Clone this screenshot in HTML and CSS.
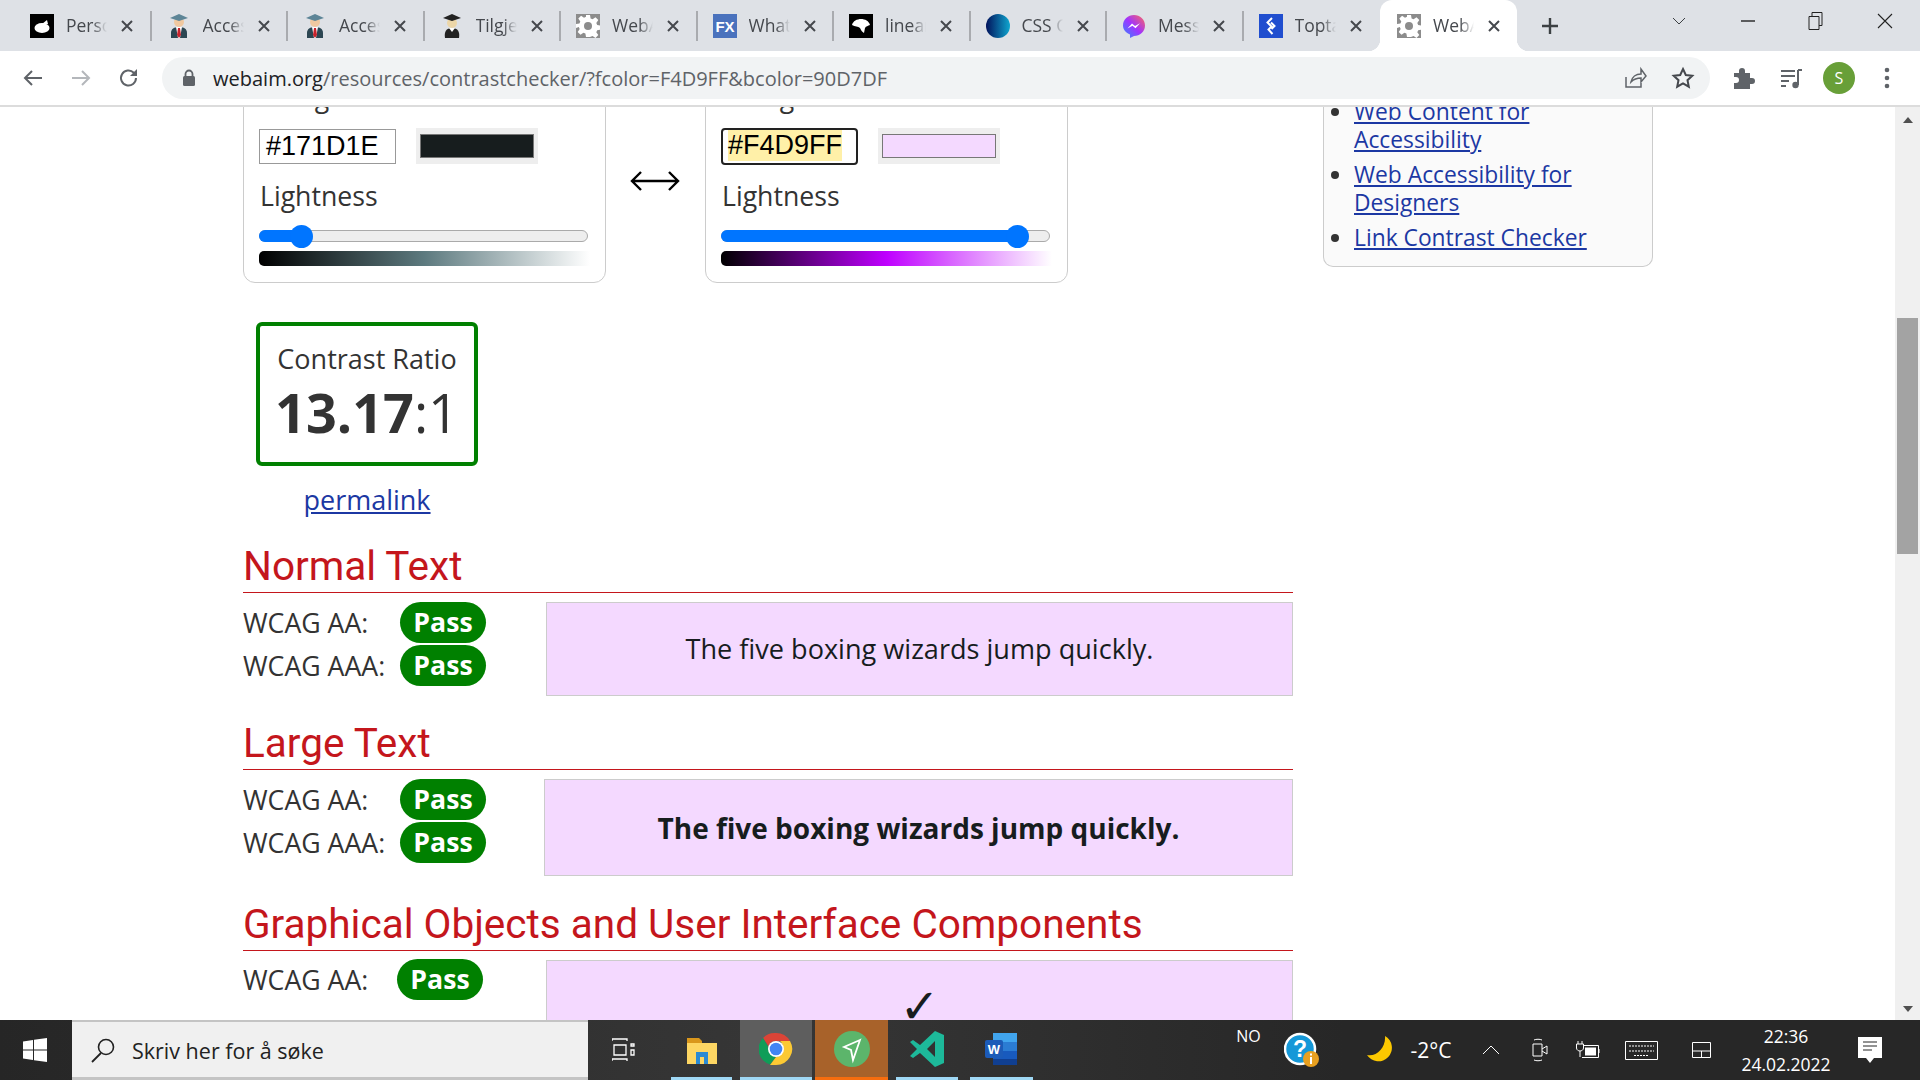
FILE: index.html
```html
<!DOCTYPE html>
<html lang="en">
<head>
    <meta charset="UTF-8">
    <meta name="viewport" content="width=device-width, initial-scale=1.0">
    <link rel="stylesheet" href="styles.css">
    <title>WebAIM: Contrast Checker</title>
</head>
<body>
    <svg class="icon-defs" width="0" height="0">
        <symbol id="close" viewBox="0 0 12 12"><path d="M1 1l10 10M11 1L1 11" stroke="#45484d" stroke-width="2" fill="none"/></symbol>
        <symbol id="gear" viewBox="0 0 24 24"><rect width="24" height="24" fill="#8c8c8c"/><path d="M10 1h4l.6 3.4 2 .9 2.900-2 2.800 2.800-2 2.900.9 2 3.400.6v4l-3.400.6-.9 2 2 2.900-2.800 2.800-2.900-2-2 .9L14 23h-4l-.6-3.400-2-.9-2.900 2-2.800-2.800 2-2.900-.9-2L0 14v-4l3.400-.6.9-2-2-2.900 2.800-2.800 2.900 2 2-.9z" fill="#fff"/><circle cx="12" cy="12" r="4" fill="#8c8c8c"/></symbol>
        <symbol id="student" viewBox="0 0 24 24"><path d="M4 24v-5c0-4 3-6 8-6s8 2 8 6v5z" fill="#2c4652"/><path d="M9 13h6l-2 11h-2z" fill="#fff"/><path d="M11 14h2l1 7-2 3-2-3z" fill="#c8232c"/><circle cx="12" cy="8" r="5" fill="#f0c8a0"/><path d="M12 0l9 4-9 3-9-3z" fill="#5d8597"/></symbol>
    </svg>

    <header class="browser-top">
        <div class="tab-strip">
            <div class="tab">
                <svg class="favicon" viewBox="0 0 24 24"><rect width="24" height="24" fill="#000"/><ellipse cx="12" cy="14" rx="7.500" ry="5" fill="#fff"/><path d="M12 10l5-4 1 4z" fill="#fff"/></svg>
                <span class="tab-title">Personal</span><svg class="tab-close"><use href="#close"/></svg><span class="tab-sep"></span>
            </div>
            <div class="tab">
                <svg class="favicon"><use href="#student"/></svg>
                <span class="tab-title">Accessibility</span><svg class="tab-close"><use href="#close"/></svg><span class="tab-sep"></span>
            </div>
            <div class="tab">
                <svg class="favicon"><use href="#student"/></svg>
                <span class="tab-title">Accessibility</span><svg class="tab-close"><use href="#close"/></svg><span class="tab-sep"></span>
            </div>
            <div class="tab">
                <svg class="favicon" viewBox="0 0 24 24"><path d="M5 24c-1-6 1-10 7-10s8 4 7 10z" fill="#222"/><circle cx="12" cy="9" r="5" fill="#ecd6a8"/><path d="M12 0l9 4-9 3-9-3z" fill="#222"/><path d="M9 14l3 4 3-4z" fill="#fff"/></svg>
                <span class="tab-title">Tilgjengelig</span><svg class="tab-close"><use href="#close"/></svg><span class="tab-sep"></span>
            </div>
            <div class="tab">
                <svg class="favicon"><use href="#gear"/></svg>
                <span class="tab-title">WebAIM</span><svg class="tab-close"><use href="#close"/></svg><span class="tab-sep"></span>
            </div>
            <div class="tab">
                <svg class="favicon" viewBox="0 0 24 24"><rect width="24" height="24" fill="#4a72bd"/><text x="12" y="18" class="fx-text">FX</text></svg>
                <span class="tab-title">What is</span><svg class="tab-close"><use href="#close"/></svg><span class="tab-sep"></span>
            </div>
            <div class="tab">
                <svg class="favicon" viewBox="0 0 24 24"><rect width="24" height="24" fill="#000"/><path d="M3 11c1-4 5-6 9-6 4 0 8 2 9 6-2 1-4 1-5 3l-1 5c-2-1-3-3-4-5-2-2-5-1-8-3z" fill="#fff"/></svg>
                <span class="tab-title">linear-gradient</span><svg class="tab-close"><use href="#close"/></svg><span class="tab-sep"></span>
            </div>
            <div class="tab">
                <svg class="favicon" viewBox="0 0 24 24"><defs><linearGradient id="cssBall"><stop offset="0" stop-color="#02135c"/><stop offset="1" stop-color="#0fa6cf"/></linearGradient></defs><circle cx="12" cy="12" r="12" fill="url(#cssBall)"/></svg>
                <span class="tab-title">CSS Gradient</span><svg class="tab-close"><use href="#close"/></svg><span class="tab-sep"></span>
            </div>
            <div class="tab">
                <svg class="favicon" viewBox="0 0 24 24"><defs><linearGradient id="msgBall" x1="0" y1="1" x2="1" y2="0"><stop offset="0" stop-color="#2f8cff"/><stop offset=".5" stop-color="#a033ff"/><stop offset="1" stop-color="#ff6a5c"/></linearGradient></defs><path d="M12 1c6 0 11 4.500 11 10.500S18 22 12 22l-4 2v-3.500C4 19 1 15.500 1 11.500 1 5.500 6 1 12 1z" fill="url(#msgBall)"/><path d="M5.500 14.500l4.500-5 3 2.500 5-2.800-4.500 5-3-2.500z" fill="#fff"/></svg>
                <span class="tab-title">Messenger</span><svg class="tab-close"><use href="#close"/></svg><span class="tab-sep"></span>
            </div>
            <div class="tab tab-before-active">
                <svg class="favicon" viewBox="0 0 24 24"><rect width="24" height="24" fill="#204ecf"/><path d="M13 4l-4.500 4.500 4 4-3 3 4 4.500M12 8.500l3.500 3.500-3 3" stroke="#fff" stroke-width="2" fill="none"/></svg>
                <span class="tab-title">Toptal</span><svg class="tab-close"><use href="#close"/></svg><span class="tab-sep"></span>
            </div>
            <div class="tab tab-active">
                <svg class="favicon"><use href="#gear"/></svg>
                <span class="tab-title">WebAIM</span><svg class="tab-close"><use href="#close"/></svg>
            </div>
            <svg class="new-tab" viewBox="0 0 20 20"><path d="M10 2v16M2 10h16" stroke="#3c4043" stroke-width="2.400"/></svg>
            <div class="window-controls">
                <span class="window-btn"><svg width="14" height="8" viewBox="0 0 14 8"><path d="M1 1l6 6 6-6" stroke="#3c4043" fill="none"/></svg></span>
                <span class="window-btn"><svg width="14" height="2" viewBox="0 0 14 2"><path d="M0 1h14" stroke="#222" stroke-width="1.400"/></svg></span>
                <span class="window-btn"><svg width="16" height="20" viewBox="0 0 16 20"><path d="M1 5.500h10v13H1zM4 5V1.500h10v13h-3" stroke="#222" fill="none"/></svg></span>
                <span class="window-btn"><svg width="16" height="16" viewBox="0 0 16 16"><path d="M1 1l14 14M15 1L1 15" stroke="#222" stroke-width="1.100"/></svg></span>
            </div>
        </div>
        <div class="toolbar">
            <span class="tool-btn"><svg width="20" height="20" viewBox="0 0 20 20"><path d="M19 10H2M9 3l-7 7 7 7" stroke="#5f6368" stroke-width="2" fill="none"/></svg></span>
            <span class="tool-btn"><svg width="20" height="20" viewBox="0 0 20 20"><path d="M1 10h17M11 3l7 7-7 7" stroke="#b4b7bb" stroke-width="2" fill="none"/></svg></span>
            <span class="tool-btn"><svg width="22" height="22" viewBox="0 0 22 22"><path d="M18 11a7.500 7.500 0 1 1-2.200-5.300L18 8" stroke="#5f6368" stroke-width="2" fill="none"/><path d="M19 2v7h-7z" fill="#5f6368"/></svg></span>
            <div class="omnibox">
                <svg class="lock" width="14" height="18" viewBox="0 0 14 18"><path d="M3.500 8V5a3.500 3.500 0 0 1 7 0v3" stroke="#5f6368" stroke-width="1.800" fill="none"/><rect x="1" y="7" width="12" height="10" rx="1.500" fill="#5f6368"/></svg>
                <span class="url"><span class="url-host">webaim.org</span>/resources/contrastchecker/?fcolor=F4D9FF&amp;bcolor=90D7DF</span>
                <span class="omni-icons">
                    <span class="tool-btn"><svg width="24" height="24" viewBox="0 0 24 24"><path d="M3 11v10h15v-4M8 16c1-5 5-8 10-8V3l5 7-5 6v-4c-4 0-7 1-10 4z" stroke="#5f6368" stroke-width="1.500" fill="none"/></svg></span>
                    <span class="tool-btn"><svg width="24" height="24" viewBox="0 0 24 24"><path d="M12 3l2.800 6 6.500.8-4.800 4.400 1.300 6.500-5.800-3.300-5.800 3.300 1.300-6.500-4.800-4.400 6.500-.8z" stroke="#45484d" stroke-width="2" fill="none"/></svg></span>
                </span>
            </div>
            <span class="tool-btn"><svg width="24" height="24" viewBox="0 0 24 24"><path d="M3 7h5V5a3 3 0 0 1 6 0v2h5v5h2a3 3 0 0 1 0 6h-2v5H3v-6h2a3 3 0 0 0 0-6H3z" fill="#5f6368"/></svg></span>
            <span class="tool-btn"><svg width="24" height="24" viewBox="0 0 24 24"><path d="M2 5h14M2 10h14M2 15h8M2 20h5" stroke="#5f6368" stroke-width="2"/><path d="M19 4v15" stroke="#5f6368" stroke-width="2"/><path d="M19 4h4" stroke="#5f6368" stroke-width="2"/><circle cx="16.500" cy="19" r="3.200" fill="#5f6368"/></svg></span>
            <span class="tool-btn"><span class="avatar">S</span></span>
            <span class="tool-btn"><svg width="6" height="22" viewBox="0 0 6 22"><circle cx="3" cy="3" r="2.300" fill="#5f6368"/><circle cx="3" cy="11" r="2.300" fill="#5f6368"/><circle cx="3" cy="19" r="2.300" fill="#5f6368"/></svg></span>
        </div>
    </header>

    <div class="viewport">
        <div class="page">
            <main class="main">
                <div class="cards">
                    <section class="card">
                        <h3 class="card-title">Foreground</h3>
                        <div class="color-row">
                            <span class="hex-input">#171D1E</span>
                            <span class="swatch"><span class="swatch-fill swatch-dark"></span></span>
                        </div>
                        <div class="card-label">Lightness</div>
                        <div class="slider"><span class="slider-fill" style="width: 39px"></span><span class="slider-thumb"></span></div>
                        <div class="ramp ramp-dark"></div>
                    </section>
                    <div class="swap">
                        <svg width="50" height="22" viewBox="0 0 50 22"><path d="M2 11h46M11 2l-9 9 9 9M39 2l9 9-9 9" stroke="#000" stroke-width="2.400" fill="none"/></svg>
                    </div>
                    <section class="card">
                        <h3 class="card-title">Background</h3>
                        <div class="color-row">
                            <span class="hex-input hex-focus"><span class="autofill">#F4D9FF</span></span>
                            <span class="swatch"><span class="swatch-fill swatch-light"></span></span>
                        </div>
                        <div class="card-label">Lightness</div>
                        <div class="slider"><span class="slider-fill" style="width: 293px"></span><span class="slider-thumb"></span></div>
                        <div class="ramp ramp-light"></div>
                    </section>
                </div>

                <div class="ratio-box">
                    <div class="ratio-label">Contrast Ratio</div>
                    <div class="ratio-value"><b>13.17</b>:1</div>
                </div>
                <a href="#" class="permalink">permalink</a>

                <h2 class="section-head section-head-first">Normal Text</h2>
                <div class="result">
                    <div class="checks">
                        <div class="check"><span class="check-label">WCAG AA:</span><span class="pass">Pass</span></div>
                        <div class="check"><span class="check-label">WCAG AAA:</span><span class="pass">Pass</span></div>
                    </div>
                    <div class="preview">The five boxing wizards jump quickly.</div>
                </div>

                <h2 class="section-head">Large Text</h2>
                <div class="result">
                    <div class="checks">
                        <div class="check"><span class="check-label">WCAG AA:</span><span class="pass">Pass</span></div>
                        <div class="check"><span class="check-label">WCAG AAA:</span><span class="pass">Pass</span></div>
                    </div>
                    <div class="preview preview-large">The five boxing wizards jump quickly.</div>
                </div>

                <h2 class="section-head section-head-last">Graphical Objects and User Interface Components</h2>
                <div class="result">
                    <div class="checks">
                        <div class="check"><span class="check-label check-label-short">WCAG AA:</span><span class="pass">Pass</span></div>
                    </div>
                    <div class="preview preview-check">&#10003;</div>
                </div>
            </main>

            <aside class="sidebar">
                <ul class="side-list">
                    <li><a href="#">Web Content for Accessibility</a></li>
                    <li><a href="#">Web Accessibility for Designers</a></li>
                    <li><a href="#">Link Contrast Checker</a></li>
                </ul>
            </aside>
        </div>
        <div class="scrollbar">
            <span class="arrow-up"></span>
            <span class="scroll-thumb"></span>
            <span class="arrow-down"></span>
        </div>
    </div>

    <footer class="taskbar">
        <div class="start">
            <svg width="24" height="24" viewBox="0 0 24 24"><path d="M0 3.500l10-1.500v9.500H0zM11 1.800L24 0v11.500H11zM0 12.500h10V22L0 20.500zM11 12.500h13V24l-13-1.800z" fill="#fff"/></svg>
        </div>
        <div class="search">
            <svg width="26" height="26" viewBox="0 0 26 26"><circle cx="16" cy="10" r="7.500" stroke="#222" stroke-width="1.600" fill="none"/><path d="M11 16L2 25" stroke="#222" stroke-width="1.800"/></svg>
            <span>Skriv her for å søke</span>
        </div>
        <div class="task-view">
            <svg width="24" height="24" viewBox="0 0 24 24"><path d="M0 3V1h15v2M0 23v-2h15v2M2 7h12v10H2zM19 6h3v2h-3zM19 12h3v5h-3z" stroke="#fff" stroke-width="1.300" fill="none"/></svg>
        </div>
        <div class="app app-files">
            <svg width="32" height="32" viewBox="0 0 32 32"><path d="M1 5h12l3 3v4H1z" fill="#d9971c"/><path d="M1 10h30v21H1z" fill="#fdd663"/><path d="M10 31V19h12v12h-4v-7h-4v7z" fill="#2a8ad4"/></svg>
        </div>
        <div class="app app-chrome">
            <svg width="34" height="34" viewBox="0 0 34 34"><path d="M17 1a16 16 0 0 1 14 8H17a8 8 0 0 0-7.500 5L4 6a16 16 0 0 1 13-5z" fill="#db4437"/><path d="M4 6l7 12a7 7 0 0 0 6 6.900L11 32.500A16 16 0 0 1 4 6z" fill="#0f9d58"/><path d="M31 9a16 16 0 0 1-14 24h-6l6-8a8 8 0 0 0 7-10c0-2-1-4-3-6z" fill="#fcc934"/><circle cx="17" cy="17" r="8" fill="#fff"/><circle cx="17" cy="17" r="6.300" fill="#4285f4"/></svg>
        </div>
        <div class="app app-proton">
            <svg width="36" height="36" viewBox="0 0 36 36"><circle cx="18" cy="18" r="18" fill="#5cb56b"/><path d="M26 9L10 16l7 3 2 10z" stroke="#fff" stroke-width="1.800" fill="none"/></svg>
        </div>
        <div class="app app-code">
            <svg width="36" height="36" viewBox="0 0 36 36"><path d="M26 0l9 4v28l-9 4-15-14-7 5-3-2 7-7-7-7 3-2 7 5zm0 10l-8 8 8 8z" fill="#1db99a"/></svg>
        </div>
        <div class="app app-word">
            <svg width="36" height="36" viewBox="0 0 36 36"><path d="M9 2h24v9H9z" fill="#41a5ee"/><path d="M9 11h24v9H9z" fill="#2b7cd3"/><path d="M9 20h24v8H9z" fill="#185abd"/><path d="M9 28h24v6H9z" fill="#103f91"/><rect x="1" y="9" width="18" height="18" rx="2" fill="#1c5bb8"/><text x="10" y="23" class="word-text">W</text></svg>
        </div>
        <div class="tray">
            <span class="tray-lang">NO</span>
            <svg class="tray-help" width="36" height="36" viewBox="0 0 36 36"><circle cx="16" cy="17" r="15" fill="#1598d8" stroke="#fff" stroke-width="2.500"/><text x="16" y="25" class="help-text">?</text><circle cx="27" cy="27" r="8" fill="#e8a020"/><rect x="26" y="25" width="2" height="7" fill="#fff"/><rect x="26" y="21.500" width="2" height="2" fill="#fff"/></svg>
            <span></span>
            <svg width="30" height="30" viewBox="0 0 30 30"><path d="M20 1a13.500 13.500 0 1 1-18 19C12 22 21 12 20 1z" fill="#fcc800"/></svg>
            <span class="tray-temp">-2°C</span>
            <svg width="18" height="10" viewBox="0 0 18 10"><path d="M1 9l8-8 8 8" stroke="#fff" fill="none"/></svg>
            <svg width="18" height="24" viewBox="0 0 18 24"><path d="M2 6h9v12H2zM11 11l5-3v8l-5-3M3 2c2-1 6-1 8 0M3 22c2 1 6 1 8 0" stroke="#fff" fill="none"/></svg>
            <svg width="24" height="18" viewBox="0 0 24 18"><path d="M6 4.500h16.500v12H6" stroke="#fff" fill="none"/><path d="M9 6.500h11v8H9z" fill="#fff"/><path d="M22.500 8h1v4h-1z" fill="#fff"/><path d="M2 0v3M6 0v3M.5 3h7v4c0 2-2 3-3.500 3S.5 9 .5 7zM4 10v6" stroke="#fff" fill="#262626"/></svg>
            <svg width="33" height="19" viewBox="0 0 33 19"><path d="M.5.5h32v18H.5z" stroke="#fff" fill="none"/><path d="M4 5h25M4 10h25M9 14.500h15" stroke="#fff" stroke-dasharray="2 1"/></svg>
            <svg width="19" height="16" viewBox="0 0 19 16"><path d="M.5.500h18v15H.5zM.5 9h18M9.500 9v6.500" stroke="#fff" fill="none"/></svg>
            <div class="tray-clock"><span>22:36</span><span>24.02.2022</span></div>
            <svg width="24" height="26" viewBox="0 0 24 26"><path d="M0 0h24v21h-8l-4 5-4-5H0z" fill="#fff"/><path d="M5 5h14M5 9h14M5 13h9" stroke="#262626"/></svg>
        </div>
    </footer>
</body>
</html>
```

FILE: styles.css
```css
* {
    box-sizing: border-box;
}
body {
    margin: 0;
    width: 1920px;
    height: 1080px;
    overflow: hidden;
    display: flex;
    flex-direction: column;
    font-family: "Open Sans", sans-serif;
    color: #333;
    background-color: #fff;
}
.icon-defs {
    position: absolute;
}

/* browser tabs */
.browser-top {
    flex: none;
    height: 107px;
    border-bottom: 2px solid #dcdcdc;
}
.tab-strip {
    height: 51px;
    padding-left: 15px;
    display: flex;
    align-items: center;
    background-color: #dee1e6;
}
.tab {
    flex: none;
    width: 136.5px;
    height: 51px;
    padding: 1px 0 0 15px;
    display: flex;
    align-items: center;
    background-color: #dee1e6;
}
.favicon {
    flex: none;
    width: 24px;
    height: 24px;
}
.tab-title {
    flex: none;
    width: 41px;
    margin-left: 12px;
    padding-bottom: 2px;
    overflow: hidden;
    white-space: nowrap;
    font-size: 17.5px;
    color: #45484d;
    -webkit-mask-image: linear-gradient(90deg, #000 65%, transparent);
    mask-image: linear-gradient(90deg, #000 65%, transparent);
}
.tab-close {
    flex: none;
    width: 12px;
    height: 12px;
    margin-left: 14px;
}
.tab-sep {
    flex: none;
    width: 2px;
    height: 30px;
    margin-left: auto;
    background-color: #a9abaf;
}
.tab-before-active .tab-sep {
    visibility: hidden;
}
.tab-active {
    position: relative;
    padding-left: 17px;
    background-color: #fff;
    border-radius: 12px 12px 0 0;
}
.tab-active::before,
.tab-active::after {
    content: "";
    position: absolute;
    bottom: 0;
    width: 12px;
    height: 12px;
}
.tab-active::before {
    left: -12px;
    background: radial-gradient(circle at 0 0, #dee1e6 12px, #fff 12.5px);
}
.tab-active::after {
    right: -12px;
    background: radial-gradient(circle at 100% 0, #dee1e6 12px, #fff 12.5px);
}
.new-tab {
    flex: none;
    width: 20px;
    height: 20px;
    margin-left: 23px;
}
.window-controls {
    margin-left: auto;
    margin-right: 1px;
    display: flex;
}
.window-btn {
    width: 68.5px;
    height: 42px;
    margin-bottom: 9px;
    display: flex;
    align-items: center;
    justify-content: center;
}

/* toolbar */
.toolbar {
    height: 54px;
    padding-left: 9px;
    display: flex;
    align-items: center;
    background-color: #fff;
}
.tool-btn {
    flex: none;
    width: 48px;
    height: 42px;
    display: flex;
    align-items: center;
    justify-content: center;
}
.omnibox {
    flex: none;
    width: 1548px;
    height: 42px;
    margin: 0 9px;
    padding-left: 20px;
    display: flex;
    align-items: center;
    border-radius: 21px;
    background-color: #f1f3f4;
}
.lock {
    flex: none;
}
.url {
    margin-left: 17px;
    font-size: 20px;
    color: #5f6368;
    white-space: nowrap;
}
.url-host {
    color: #202124;
}
.omni-icons {
    margin-left: auto;
    padding-right: 3px;
    display: flex;
}
.avatar {
    width: 32px;
    height: 32px;
    border-radius: 50%;
    display: flex;
    align-items: center;
    justify-content: center;
    font-size: 16px;
    color: #fff;
    background-color: #689f38;
}

/* page area */
.viewport {
    flex: none;
    height: 913px;
    display: flex;
    overflow: hidden;
}
.page {
    flex: 1;
    margin-top: -51px;
    padding-left: 243px;
    display: flex;
    align-items: flex-start;
}
.main {
    flex: none;
    width: 1050px;
}
.cards {
    display: flex;
}
.card {
    flex: none;
    width: 363px;
    padding: 23px 17px 16px 15px;
    border: 1px solid #ccc;
    border-radius: 0 0 12px 12px;
}
.card-title {
    margin: 0 0 14px;
    font-size: 26.67px;
    font-weight: 400;
    line-height: 34px;
}
.color-row {
    display: flex;
    align-items: center;
    height: 36px;
}
.hex-input {
    flex: none;
    width: 137px;
    height: 35px;
    padding-left: 6px;
    border: 1px solid #999;
    font-family: "Liberation Sans", Arial, sans-serif;
    font-size: 27px;
    line-height: 32px;
    color: #000;
    background-color: #fff;
}
.hex-focus {
    height: 37px;
    padding-left: 5px;
    border: 2.500px solid #222;
    border-radius: 4px;
    line-height: 31px;
    background-color: #fff;
}
.autofill {
    display: inline-block;
    width: 114px;
    background-color: #fff0a8;
}
.swatch {
    flex: none;
    width: 122px;
    height: 36px;
    margin-left: 20px;
    padding: 6px 4px;
    background-color: #eee;
}
.swatch-fill {
    display: block;
    height: 24px;
    border: 1px solid #777;
}
.swatch-dark {
    background-color: #171d1e;
}
.swatch-light {
    background-color: #f4d9ff;
}
.card-label {
    height: 36px;
    margin: 14px 0 0 1px;
    font-size: 26.67px;
    line-height: 36px;
}
.slider {
    width: 329px;
    height: 12px;
    margin: 16px 0 9px;
    display: flex;
    align-items: center;
    border: 1px solid #aaa;
    border-radius: 6px;
    background-color: #eee;
}
.slider-fill {
    height: 12px;
    margin-left: -1px;
    border-radius: 6px 0 0 6px;
    background-color: #0075ff;
}
.slider-thumb {
    flex: none;
    width: 23px;
    height: 23px;
    margin-left: -8px;
    border-radius: 50%;
    background-color: #0075ff;
}
.ramp {
    width: 331px;
    height: 15px;
    border-radius: 5px 0 0 5px;
}
.ramp-dark {
    background: linear-gradient(90deg, #000, #5d7a7f 50%, #fff);
}
.ramp-light {
    background: linear-gradient(90deg, #000, #bf00ff 50%, #fff);
}
.swap {
    flex: none;
    width: 99px;
    padding: 114px 1px 0 0;
    display: flex;
    justify-content: center;
    align-items: flex-start;
}

/* ratio */
.ratio-box {
    width: 222px;
    height: 144px;
    margin: 39px 0 0 13px;
    padding-top: 15px;
    border: 4px solid #008000;
    border-radius: 6px;
    text-align: center;
}
.ratio-label {
    font-size: 27px;
    line-height: 36px;
}
.ratio-value {
    font-size: 54px;
    line-height: 70px;
}
.permalink {
    display: block;
    width: 248px;
    margin-top: 16px;
    text-align: center;
    font-size: 27px;
    line-height: 36px;
    color: #1c38a3;
}

/* results */
.section-head {
    margin: 24px 0 9px;
    padding-bottom: 3px;
    border-bottom: 1px solid #c4161c;
    font-family: Roboto, sans-serif;
    font-size: 40.5px;
    font-weight: 400;
    line-height: 46px;
    color: #c4161c;
}
.section-head-first {
    margin-top: 25px;
}
.section-head-last {
    margin: 25px 0 8px;
}
.result {
    display: flex;
    justify-content: space-between;
    align-items: flex-start;
}
.check {
    height: 41px;
    margin-bottom: 2px;
    display: flex;
    align-items: center;
}
.check-label {
    width: 157px;
    font-size: 26.67px;
}
.check-label-short {
    width: 154px;
}
.pass {
    width: 86px;
    height: 41px;
    border-radius: 21px;
    text-align: center;
    font-size: 26.67px;
    font-weight: 700;
    line-height: 40px;
    color: #fff;
    background-color: #008000;
}
.preview {
    width: 747px;
    height: 94px;
    border: 1px solid #ccc;
    text-align: center;
    font-size: 27.1px;
    line-height: 92px;
    color: #171d1e;
    background-color: #f4d9ff;
}
.preview-large {
    width: 749px;
    height: 97px;
    font-size: 28px;
    font-weight: 700;
    line-height: 96px;
}
.preview-check {
    margin-top: 1px;
    font-family: "DejaVu Sans", sans-serif;
    font-size: 48px;
    line-height: 90px;
}

/* sidebar */
.sidebar {
    flex: none;
    width: 330px;
    margin-left: 30px;
    padding: 42px 14px 14px 0;
    border: 1px solid #ccc;
    border-top: 0;
    border-radius: 0 0 10px 10px;
    background-color: #fafafa;
}
.side-list {
    margin: 0;
    padding-left: 30px;
    font-size: 22.8px;
    line-height: 28px;
}
.side-list li {
    margin-bottom: 7px;
}
.side-list li:last-child {
    margin-bottom: 0;
}
.side-list a {
    color: #1c38a3;
}

/* scrollbar */
.scrollbar {
    flex: none;
    width: 25px;
    display: flex;
    flex-direction: column;
    align-items: center;
    padding-top: 10px;
    background-color: #f0f0f0;
}
.arrow-up {
    border: 5.5px solid transparent;
    border-top: 0;
    border-bottom: 6px solid #505050;
}
.scroll-thumb {
    width: 21px;
    height: 236px;
    margin-top: 195px;
    background-color: #a3a3a3;
}
.arrow-down {
    margin-top: auto;
    margin-bottom: 8px;
    border: 5.5px solid transparent;
    border-bottom: 0;
    border-top: 6px solid #505050;
}

/* windows taskbar */
.taskbar {
    flex: none;
    height: 60px;
    display: flex;
    background: linear-gradient(90deg, #262626, #363636 40%, #272727 70%);
    color: #fff;
}
.start {
    flex: none;
    width: 72px;
    padding-right: 2px;
    display: flex;
    align-items: center;
    justify-content: center;
}
.search {
    flex: none;
    width: 516px;
    padding: 1px 0 0 18px;
    display: flex;
    align-items: center;
    gap: 16px;
    border-top: 2px solid #c4c4c4;
    border-bottom: 3px solid #c4c4c4;
    font-size: 21.5px;
    color: #222;
    background-color: #f0f0f0;
}
.task-view {
    flex: none;
    width: 72px;
    display: flex;
    align-items: center;
    justify-content: center;
}
.app {
    flex: none;
    display: flex;
    align-items: center;
    justify-content: center;
    border-bottom: 3px solid #9fd8f5;
}
.app-files {
    width: 61px;
    margin-left: 11px;
}
.app-chrome {
    width: 72px;
    margin-left: 8px;
    background-color: #5e5e5e;
}
.app-proton {
    width: 73px;
    margin-left: 3px;
    background-color: #a8622a;
    border-bottom-color: #f76d0e;
}
.app-code {
    width: 62px;
    margin-left: 8px;
}
.app-word {
    width: 63px;
    margin-left: 12px;
}
.fx-text {
    font: 700 15px "Liberation Sans", sans-serif;
    fill: #fff;
    text-anchor: middle;
}
.word-text {
    font: 700 13px "Liberation Sans", sans-serif;
    fill: #fff;
    text-anchor: middle;
}
.help-text {
    font: 700 23px "Liberation Sans", sans-serif;
    fill: #fff;
    text-anchor: middle;
}
.tray {
    flex: none;
    width: 695px;
    margin-left: auto;
    display: grid;
    grid-template-columns: 47px 56px 28px 48px 54px 66px 32px 64px 42px 78px 92px 76px;
    justify-items: center;
    align-items: center;
}
.tray-lang {
    align-self: start;
    padding-top: 5px;
    font-size: 16px;
}
.tray-help {
    margin-left: 4px;
}
.tray-temp {
    font-size: 21px;
}
.tray-clock {
    display: flex;
    flex-direction: column;
    align-items: center;
    gap: 6px;
    font-size: 17.5px;
    line-height: 22px;
}
```
